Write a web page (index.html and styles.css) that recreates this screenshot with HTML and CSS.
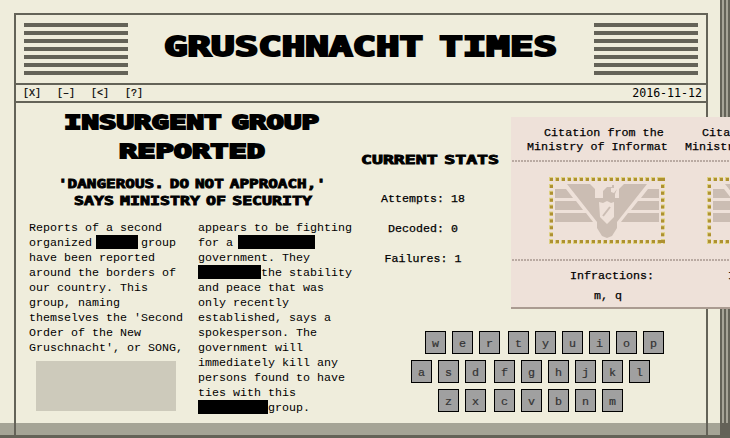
FILE: index.html
```
<!DOCTYPE html>
<html lang="en">
<head>
<meta charset="utf-8">
<title>Gruschnacht Times</title>
<link rel="stylesheet" href="styles.css">
</head>
<body>
<svg class="defs" width="0" height="0" aria-hidden="true">
  <symbol id="emblem" viewBox="0 0 116 67">
    <g fill="none" stroke="#ded080" stroke-width="4">
      <path d="M0 2H116M0 65H116" stroke-dasharray="4 2"/>
      <path d="M2 0V67M114 0V67" stroke-dasharray="4 2.9"/>
    </g>
    <g fill="none" stroke="#ae9132" stroke-width="3">
      <path d="M1 2.5H116M1 64.5H116" stroke-dasharray="3 3"/>
      <path d="M2.5 1V67M113.500 1V67" stroke-dasharray="3 3.900"/>
    </g>
    <g fill="#cbbdb3">
      <path d="M6 12H17L24 21H6ZM6 24H27L34 33H6ZM6 36H37L44 45H6ZM110 12H99L92 21H110ZM110 24H89L82 33H110ZM110 36H79L72 45H110Z"/>
      <path d="M18 7H41L46 12V21H54V14L58 10H63V8H65V11H62V15L65 16L68 12L66 17V21H70V12L75 7H98L68 45V51L63 59L58 61L53 59L48 51V45Z"/>
    </g>
    <path d="M50 25L54 26L58 24L62 26L65 25V40L58 47L51 40Z" fill="#eee1d9"/>
    <path d="M54 39L61 30" stroke="#cbbdb3" stroke-width="2"/>
  </symbol>
</svg>
<div class="desk">
  <main class="paper">
    <header class="masthead">
      <div class="stripes"></div>
      <svg class="title" width="396" height="30"><text x="1" y="26" textLength="393" lengthAdjust="spacingAndGlyphs">GRUSCHNACHT TIMES</text></svg>
      <div class="stripes"></div>
    </header>
    <nav class="bar">
      <div class="controls"><span>[X]</span><span>[–]</span><span>[&lt;]</span><span>[?]</span></div>
      <time>2016-11-12</time>
    </nav>
    <div class="content">
      <article class="story">
        <svg class="headline" width="324" height="106">
          <g class="large"><text x="35" y="26" textLength="255" lengthAdjust="spacingAndGlyphs">INSURGENT GROUP</text><text x="90" y="55" textLength="146" lengthAdjust="spacingAndGlyphs">REPORTED</text></g>
          <g class="small"><text x="29" y="84.500" textLength="268" lengthAdjust="spacingAndGlyphs">'DANGEROUS. DO NOT APPROACH,'</text><text x="45" y="101.500" textLength="238" lengthAdjust="spacingAndGlyphs">SAYS MINISTRY OF SECURITY</text></g>
        </svg>
        <div class="columns">
          <div class="column">
            <p>Reports of a second<br>organized <i class="redacted r1"></i>group<br>have been reported<br>around the borders of<br>our country. This<br>group, naming<br>themselves the 'Second<br>Order of the New<br>Gruschnacht', or SONG,</p>
            <div class="photo"></div>
          </div>
          <div class="column">
            <p>appears to be fighting<br>for a <i class="redacted r2"></i><br>government. They<br><i class="redacted r3"></i>the stability<br>and peace that was<br>only recently<br>established, says a<br>spokesperson. The<br>government will<br>immediately kill any<br>persons found to have<br>ties with this<br><i class="redacted r4"></i>group.</p>
          </div>
        </div>
      </article>
      <section class="side">
        <div class="upper">
          <div class="stats">
            <svg class="stats-title" width="144" height="18"><text x="3" y="14" textLength="138" lengthAdjust="spacingAndGlyphs">CURRENT STATS</text></svg>
            <p>Attempts: 18</p><p>Decoded: 0</p><p>Failures: 1</p>
          </div>
          <div class="citations">
            <section class="citation"><h2><span>Citation from the</span><br>Ministry of Informat</h2><div class="seal"><svg><use href="#emblem"/></svg></div><p class="label">Infractions:</p><p class="letters">m, q</p></section>
            <section class="citation"><h2><span>Citation from the</span><br>Ministry of Informat</h2><div class="seal"><svg><use href="#emblem"/></svg></div><p class="label">Infractions:</p><p class="letters">m, q</p></section>
          </div>
        </div>
        <div class="keyboard">
          <div class="row top"><div><kbd>w</kbd><kbd>e</kbd><kbd>r</kbd></div><div><kbd>t</kbd><kbd>y</kbd><kbd>u</kbd><kbd>i</kbd><kbd>o</kbd><kbd>p</kbd></div></div>
          <div class="row home"><div><kbd>a</kbd><kbd>s</kbd><kbd>d</kbd></div><div><kbd>f</kbd><kbd>g</kbd><kbd>h</kbd><kbd>j</kbd><kbd>k</kbd><kbd>l</kbd></div></div>
          <div class="row bottom"><div><kbd>z</kbd><kbd>x</kbd></div><div><kbd>c</kbd><kbd>v</kbd><kbd>b</kbd><kbd>n</kbd><kbd>m</kbd></div></div>
        </div>
      </section>
    </div>
  </main>
  <div class="edge"></div>
</div>
<div class="shade"></div>
</body>
</html>
```
FILE: styles.css
```
* { box-sizing: border-box; }
body { margin: 0; width: 730px; height: 438px; overflow: hidden; background: #efeddc; color: #000; font: 11.67px/15px "Liberation Mono", monospace; }
p, h2 { margin: 0; }
.defs { position: absolute; }
.desk { display: flex; height: 438px; overflow: hidden; justify-content: space-between; padding-left: 14px; }
.paper { width: 694px; margin-top: 13px; border: 2px solid #646358; border-bottom: 0; }
.edge { width: 10px; background: linear-gradient(transparent 423px, #646358 423px), repeating-linear-gradient(90deg, #646358 0 2px, #a6a497 2px 4px); }
.masthead { display: flex; justify-content: space-between; height: 70px; padding: 8px; border-bottom: 2px solid #646358; }
.stripes { width: 104px; height: 52px; background: repeating-linear-gradient(#646358 0 4px, transparent 4px 8px); }
svg text { font-family: "DejaVu Sans Mono", monospace; font-weight: 700; letter-spacing: 0; word-spacing: -5px; stroke: #000; stroke-width: 2; stroke-linejoin: miter; stroke-miterlimit: 2; }
.title { margin-top: 7px; font-size: 26px; }
.bar { display: flex; justify-content: space-between; height: 18px; padding: 0 4px 0 7px; border-bottom: 2px solid #646358; line-height: 18px; }
.controls { display: flex; gap: 16px; font-size: 10px; -webkit-text-stroke: .2px #000; }
.bar time { font: 11.6px/17px "DejaVu Sans Mono", monospace; }
.content { display: flex; }
.story { width: 341px; padding-left: 13px; flex: none; }
.headline { display: block; }
.large { font-size: 19.500px; }
.large text { stroke-width: 1.8; }
.small { font-size: 13px; }
.small text { stroke-width: .9; word-spacing: -3px; }
.columns { display: flex; gap: 14px; margin-top: 12px; }
.column { width: 155px; white-space: nowrap; }
.redacted { display: inline-block; height: 14px; background: #000; vertical-align: top; margin: -1px 0 0; }
.r1 { width: 42px; margin-right: 3px; margin-left: -3px; }
.r2 { width: 77px; margin-left: -2px; }
.r3 { width: 63px; }
.r4 { width: 70px; }
.photo { width: 140px; height: 50px; margin: 5px 0 0 7px; background: #cdcabb; }
.side { flex: none; width: 373px; }
.upper { display: flex; padding-top: 14px; }
.stats { width: 154px; flex: none; padding-top: 33px; text-align: center; }
.stats-title { display: block; margin: 0 0 23px 1px; font-size: 13px; }
.stats p { margin-bottom: 15px; padding-right: 22px; font-size: 11.600px; letter-spacing: .04px; -webkit-text-stroke: .25px #000; }
.stats-title text { stroke-width: .9; word-spacing: -3px; }
.citations { display: flex; height: 192px; background: #eee1d9; border-bottom: 2px solid #aa9b91; position: relative; -webkit-text-stroke: .25px #000; }
.citation { width: 158px; flex: none; }
.citation h2 { height: 43px; padding: 9px 0 0 16px; font-size: 11.700px; font-weight: 400; line-height: 14px; white-space: nowrap; letter-spacing: .03px; }
.citation h2 span { padding-left: 17px; }
.seal { height: 101px; margin-left: 1px; padding: 17px 0 0 37px; background: repeating-linear-gradient(90deg, #b9aaa2 0 2px, #eee1d9 2px 3px) top left / 157px 2px no-repeat, repeating-linear-gradient(90deg, #b9aaa2 0 2px, #eee1d9 2px 3px) bottom left / 157px 2px no-repeat; }
.seal svg { width: 116px; height: 67px; display: block; }
.label { margin: 8px 0 5px 59px; }
.letters { padding-left: 83px; }
.keyboard { width: 254px; margin: 22px 0 0 54px; }
.row { display: flex; gap: 8px; height: 29px; }
.row > div { display: flex; gap: 6px; }
.top { margin-left: 14px; }
.bottom { margin-left: 27px; }
kbd { width: 21px; height: 23px; border: 1px solid #000; background: #a0a0a0; color: #333; text-align: center; font: 11.67px/25px "Liberation Mono", monospace; -webkit-text-stroke: .2px #333; }
.shade { position: absolute; inset: 423px 0 0; background: rgba(100, 99, 88, .53); border-bottom: 3px solid #646358; }
```
